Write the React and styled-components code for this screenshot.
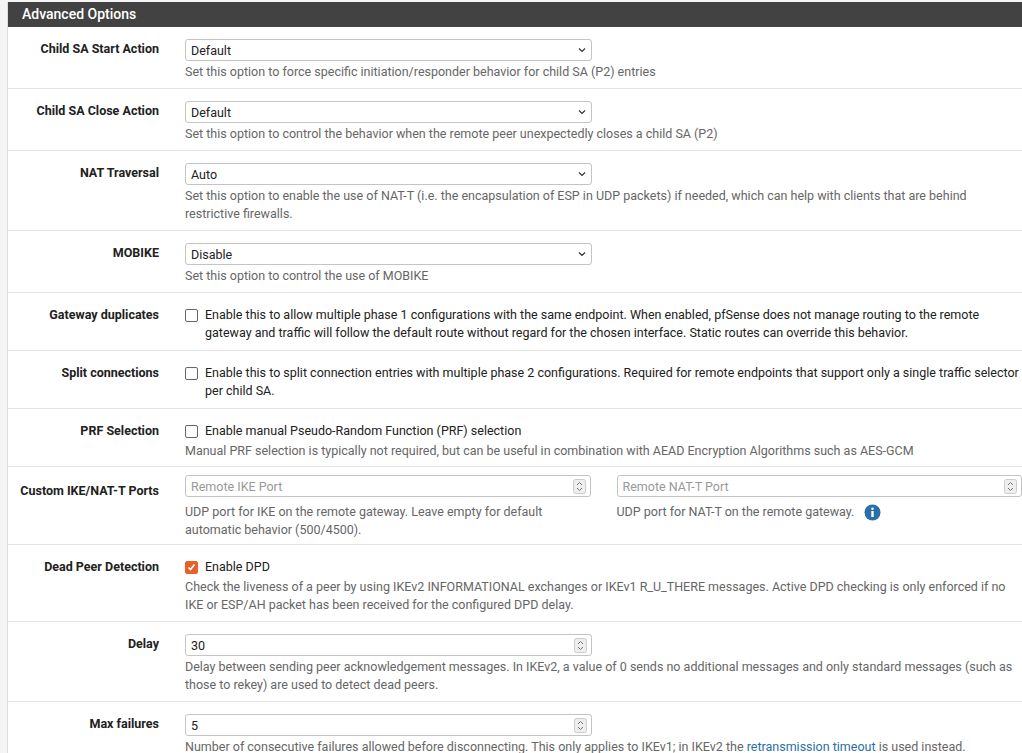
import React from 'react';
import styled, { createGlobalStyle } from 'styled-components';

const Global = createGlobalStyle`
  body { margin: 0; background: #f5f5f5; font-family: Roboto, "Liberation Sans", sans-serif; font-size: 12.5px; color: #212121; }
`;

const Panel = styled.div`
  margin: 2px 0 0 7px;
  background: #fff;
  border-left: 1px solid #ddd;
`;

const Heading = styled.div`
  background: #424242;
  color: #fff;
  font-size: 14px;
  font-weight: 500;
  height: 25px;
  line-height: 25px;
  padding-left: 14px;
`;

const Row = styled.div`
  display: grid;
  grid-template-columns: 151px 1fr;
  column-gap: 26px;
  border-bottom: 1px solid #e4e4e4;
  padding: ${p => p.$pt || 12}px 0 ${p => p.$pb || 7}px;
`;

const Label = styled.div`
  text-align: right;
  font-weight: bold;
  padding-top: ${p => p.$pt || 2}px;
`;

const Body = styled.div`
  display: flex;
  flex-direction: column;
`;

const Field = styled.div`
  width: 396px;
  height: 20px;
  border: 1px solid #c4c4c4;
  border-radius: 3px;
  display: flex;
  align-items: center;
  justify-content: space-between;
  padding: 0 4px 0 5px;
  color: ${p => (p.$ph ? '#999' : '#222')};
  box-sizing: content-box;
`;

const Wide = styled(Field)`
  width: auto;
`;

const Help = styled.div`
  color: #666;
  line-height: 18px;
  margin-top: ${p => p.$mt || 2}px;
  padding-right: ${p => (p.$wide ? 0 : 48)}px;
`;

const Check = styled.div`
  display: flex;
  align-items: center;
  gap: 7px;
  line-height: 18px;
  & > span { flex: 1; }
`;

const Box = styled.span`
  flex: 0 0 auto !important;
  width: 11px;
  height: 11px;
  border: 1px solid ${p => (p.$on ? '#e5632b' : '#666')};
  background: ${p => (p.$on ? '#e5632b' : '#fff')};
  border-radius: 2px;
  align-self: flex-start;
  margin-top: 3px;
  display: flex;
  align-items: center;
  justify-content: center;
`;

const Cols = styled.div`
  display: grid;
  grid-template-columns: 1fr 1fr;
  column-gap: 26px;
  & > div { display: flex; flex-direction: column; }
`;

const Link = styled.a`
  color: #2a6fa8;
  text-decoration: none;
`;

const Caret = () => (
  <svg width="10" height="10" viewBox="0 0 10 10"><path d="M2 3.5l3 3 3-3" fill="none" stroke="#333" strokeWidth="1.2" /></svg>
);
const Spin = () => (
  <svg width="13" height="15" viewBox="0 0 13 15"><rect x="0.5" y="0.5" width="12" height="14" rx="2" fill="#eee" stroke="#ccc" /><path d="M4 6l2.5-2.5L9 6M4 9l2.5 2.5L9 9" fill="none" stroke="#777" /></svg>
);
const Tick = () => (
  <svg width="9" height="9" viewBox="0 0 9 9"><path d="M1.5 4.5l2 2 4-5" fill="none" stroke="#fff" strokeWidth="1.6" /></svg>
);

const Select = ({ v }) => <Field>{v}<Caret /></Field>;
const Num = ({ v, ph, wide }) => {
  const C = wide ? Wide : Field;
  return <C $ph={ph}>{v}<Spin /></C>;
};

export default function App() {
  return (
    <>
      <Global />
      <Panel>
        <Heading>Advanced Options</Heading>
        <Row><Label>Child SA Start Action</Label><Body><Select v="Default" /><Help>Set this option to force specific initiation/responder behavior for child SA (P2) entries</Help></Body></Row>
        <Row><Label>Child SA Close Action</Label><Body><Select v="Default" /><Help>Set this option to control the behavior when the remote peer unexpectedly closes a child SA (P2)</Help></Body></Row>
        <Row><Label>NAT Traversal</Label><Body><Select v="Auto" /><Help>Set this option to enable the use of NAT-T (i.e. the encapsulation of ESP in UDP packets) if needed, which can help with clients that are behind restrictive firewalls.</Help></Body></Row>
        <Row><Label>MOBIKE</Label><Body><Select v="Disable" /><Help>Set this option to control the use of MOBIKE</Help></Body></Row>
        <Row $pt={13} $pb={8}><Label $pt={1}>Gateway duplicates</Label><Body><Check><Box /><span>Enable this to allow multiple phase 1 configurations with the same endpoint. When enabled, pfSense does not manage routing to the remote gateway and traffic will follow the default route without regard for the chosen interface. Static routes can override this behavior.</span></Check></Body></Row>
        <Row $pt={13} $pb={8}><Label $pt={1}>Split connections</Label><Body><Check><Box /><span>Enable this to split connection entries with multiple phase 2 configurations. Required for remote endpoints that support only a single traffic selector per child SA.</span></Check></Body></Row>
        <Row $pt={13} $pb={6}><Label $pt={1}>PRF Selection</Label><Body><Check><Box /><span>Enable manual Pseudo-Random Function (PRF) selection</span></Check><Help $wide>Manual PRF selection is typically not required, but can be useful in combination with AEAD Encryption Algorithms such as AES-GCM</Help></Body></Row>
        <Row $pt={8} $pb={5}><Label $pt={8}>Custom IKE/NAT-T Ports</Label>
          <Cols>
            <div><Num wide ph v="Remote IKE Port" /><Help $mt={6} $wide style={{ paddingRight: 40 }}>UDP port for IKE on the remote gateway. Leave empty for default automatic behavior (500/4500).</Help></div>
            <div><Num wide ph v="Remote NAT-T Port" /><Help $mt={6} $wide style={{ display: 'flex', alignItems: 'center', gap: 10 }}>UDP port for NAT-T on the remote gateway.
              <svg width="17" height="17" viewBox="0 0 17 17"><circle cx="8.5" cy="8.5" r="8" fill="#2a6fa8" /><circle cx="8.5" cy="4.8" r="1.3" fill="#fff" /><rect x="7.3" y="7" width="2.4" height="6" fill="#fff" /></svg></Help></div>
          </Cols>
        </Row>
        <Row $pt={13}><Label $pt={1}>Dead Peer Detection</Label><Body><Check><Box $on><Tick /></Box><span>Enable DPD</span></Check><Help $wide style={{ paddingRight: 8 }}>Check the liveness of a peer by using IKEv2 INFORMATIONAL exchanges or IKEv1 R_U_THERE messages. Active DPD checking is only enforced if no IKE or ESP/AH packet has been received for the configured DPD delay.</Help></Body></Row>
        <Row><Label>Delay</Label><Body><Num v="30" /><Help $wide style={{ paddingRight: 4 }}>Delay between sending peer acknowledgement messages. In IKEv2, a value of 0 sends no additional messages and only standard messages (such as those to rekey) are used to detect dead peers.</Help></Body></Row>
        <Row><Label>Max failures</Label><Body><Num v="5" /><Help $wide>Number of consecutive failures allowed before disconnecting. This only applies to IKEv1; in IKEv2 the <Link>retransmission timeout</Link> is used instead.</Help></Body></Row>
      </Panel>
    </>
  );
}
